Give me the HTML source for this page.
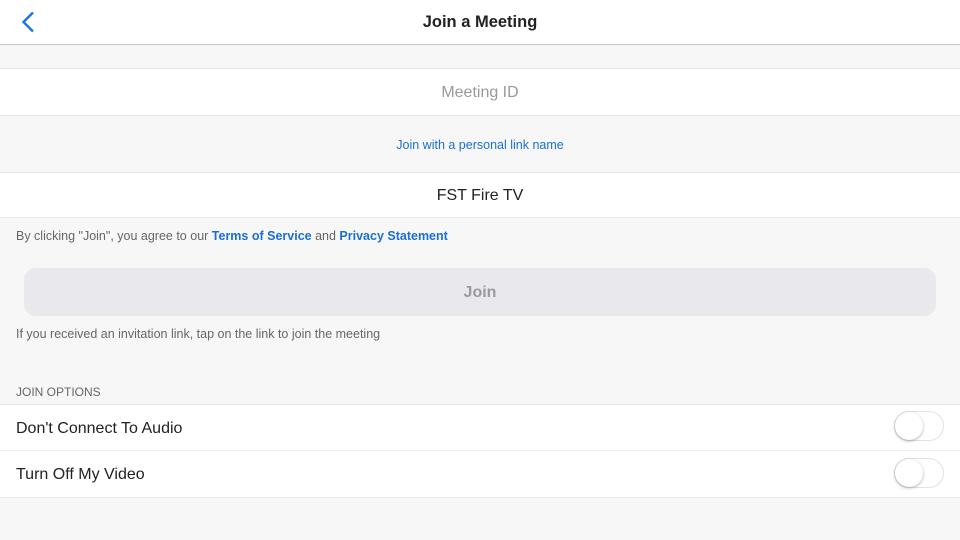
<!DOCTYPE html>
<html><head><style>
*{margin:0;padding:0;box-sizing:border-box}
body{width:960px;height:540px;background:#f7f7f7;font-family:"Liberation Sans",sans-serif;position:relative;overflow:hidden}
.a{position:absolute;left:0;width:960px}
.w{background:#fff}
.c{display:flex;align-items:center;justify-content:center}
.t{position:absolute;white-space:nowrap}
.tg{position:absolute;left:894px;width:50px;height:30px;border:1px solid #e2e2e2;border-radius:15px;background:#fff}
.tg:after{content:"";position:absolute;left:0;top:0;width:28px;height:28px;border-radius:50%;background:#fff;box-shadow:0 1px 3px rgba(0,0,0,.3)}
</style></head><body>
<div class="a w c" style="top:0;border-bottom:1px solid #c8c8c8;height:45px;font-size:16.5px;font-weight:bold;color:#222;padding-top:1px">Join a Meeting</div>
<svg class="t" style="left:19px;top:11px" width="18" height="22" viewBox="0 0 18 22"><path d="M14 1.5 L4.5 11 L14 20.5" fill="none" stroke="#1a73e8" stroke-width="2.4"/></svg>
<div class="a w c" style="top:68px;height:48px;border-top:1px solid #e6e6e6;border-bottom:1px solid #e6e6e6;font-size:16px;color:#999;padding-top:2px">Meeting ID</div>
<div class="a c" style="top:116px;height:57px;font-size:12.5px;color:#1a6fd6">Join with a personal link name</div>
<div class="a w c" style="top:172px;height:46px;border-top:1px solid #e6e6e6;border-bottom:1px solid #e6e6e6;font-size:16px;color:#222;padding-top:2px">FST Fire TV</div>
<div class="t" style="left:16px;top:229px;font-size:12.5px;color:#666">By clicking "Join", you agree to our <b style="color:#1a6fd6">Terms of Service</b> and <b style="color:#1a6fd6">Privacy Statement</b></div>
<div class="t c" style="left:24px;top:268px;width:912px;height:48px;background:#e8e8ed;border-radius:12px;font-size:16px;font-weight:bold;color:#9a9aa0;padding-top:2px">Join</div>
<div class="t" style="left:16px;top:327px;font-size:12.5px;color:#666">If you received an invitation link, tap on the link to join the meeting</div>
<div class="t" style="left:16px;top:385px;font-size:12px;color:#666">JOIN OPTIONS</div>
<div class="a w" style="top:404px;height:47px;border-top:1px solid #e6e6e6;border-bottom:1px solid #eee"><div class="t" style="left:16px;top:15px;font-size:16px;color:#222">Don't Connect To Audio</div></div>
<div class="a w" style="top:451px;height:47px;border-bottom:1px solid #e6e6e6"><div class="t" style="left:16px;top:15px;font-size:16px;color:#222">Turn Off My Video</div></div>
<div class="tg" style="top:411px"></div>
<div class="tg" style="top:458px"></div>
</body></html>
